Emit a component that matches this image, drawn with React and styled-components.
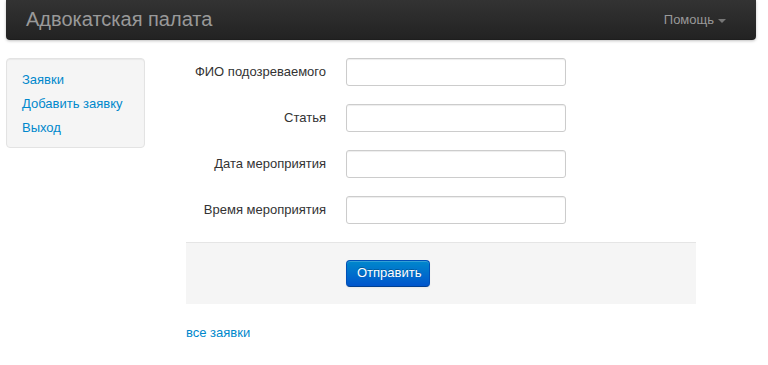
import React from "react";
import styled, { createGlobalStyle } from "styled-components";

const GlobalStyle = createGlobalStyle`
  body {
    margin: 0;
    background: #fff;
    font-family: "Liberation Sans", Arial, sans-serif;
    font-size: 13px;
    line-height: 18px;
    color: #333;
  }
`;

const Navbar = styled.div`
  margin: 0 12px 0 6px;
  height: 40px;
  display: flex;
  align-items: center;
  justify-content: space-between;
  padding: 0 20px;
  background: linear-gradient(to bottom, #333333, #222222);
  border-radius: 0 0 4px 4px;
  box-shadow: 0 1px 3px rgba(0, 0, 0, 0.25), inset 0 -1px 0 rgba(0, 0, 0, 0.1);
`;

const Brand = styled.a`
  font-size: 20px;
  color: #999;
  text-decoration: none;
  margin-top: -3px;
`;

const Help = styled.a`
  display: flex;
  align-items: center;
  gap: 4px;
  color: #999;
  font-size: 13px;
  text-decoration: none;
  margin-right: 10px;

  &::after {
    content: "";
    border-top: 4px solid #777;
    border-left: 4px solid transparent;
    border-right: 4px solid transparent;
    margin-top: 1px;
  }
`;

const Body = styled.div`
  display: flex;
  align-items: flex-start;
  padding: 18px 0 0 6px;
`;

const Well = styled.div`
  width: 139px;
  box-sizing: border-box;
  background: #f5f5f5;
  border: 1px solid #e3e3e3;
  border-radius: 4px;
  padding: 9px 0 7px;
  box-shadow: inset 0 1px 1px rgba(0, 0, 0, 0.05);
  display: flex;
  flex-direction: column;
`;

const NavLink = styled.a`
  color: #0088cc;
  text-decoration: none;
  padding: 3px 15px;
  line-height: 18px;
`;

const Main = styled.div`
  margin-left: 41px;
  width: 510px;
`;

const Group = styled.div`
  display: flex;
  margin-bottom: 18px;
`;

const Label = styled.label`
  width: 140px;
  text-align: right;
  padding-top: 5px;
  margin-right: 20px;
  color: #333;
`;

const Input = styled.input`
  box-sizing: border-box;
  width: 220px;
  height: 28px;
  padding: 4px;
  border: 1px solid #ccc;
  border-radius: 3px;
  box-shadow: inset 0 1px 1px rgba(0, 0, 0, 0.075);
  font: inherit;
`;

const Actions = styled.div`
  background: #f5f5f5;
  border-top: 1px solid #e5e5e5;
  padding: 17px 20px 17px 160px;
`;

const Button = styled.button`
  font-family: inherit;
  font-size: 13px;
  line-height: 18px;
  padding: 3px 10px 4px;
  width: 84px;
  color: #fff;
  text-shadow: 0 -1px 0 rgba(0, 0, 0, 0.25);
  background: linear-gradient(to bottom, #0088cc, #0055cc);
  border: 1px solid #0050b8;
  border-bottom-color: #003f90;
  border-radius: 4px;
  box-shadow: inset 0 1px 0 rgba(255, 255, 255, 0.2), 0 1px 2px rgba(0, 0, 0, 0.05);
  cursor: pointer;
`;

const AllLink = styled.a`
  display: inline-block;
  margin-top: 20px;
  color: #0088cc;
  text-decoration: none;
`;

const fields = ["ФИО подозреваемого", "Статья", "Дата мероприятия", "Время мероприятия"];

export default function App() {
  return (
    <>
      <GlobalStyle />
      <Navbar>
        <Brand href="#">Адвокатская палата</Brand>
        <Help href="#">Помощь</Help>
      </Navbar>
      <Body>
        <Well>
          <NavLink href="#">Заявки</NavLink>
          <NavLink href="#">Добавить заявку</NavLink>
          <NavLink href="#">Выход</NavLink>
        </Well>
        <Main>
          <form>
            {fields.map((f) => (
              <Group key={f}>
                <Label>{f}</Label>
                <Input type="text" />
              </Group>
            ))}
            <Actions>
              <Button type="button">Отправить</Button>
            </Actions>
          </form>
          <AllLink href="#">все заявки</AllLink>
        </Main>
      </Body>
    </>
  );
}
